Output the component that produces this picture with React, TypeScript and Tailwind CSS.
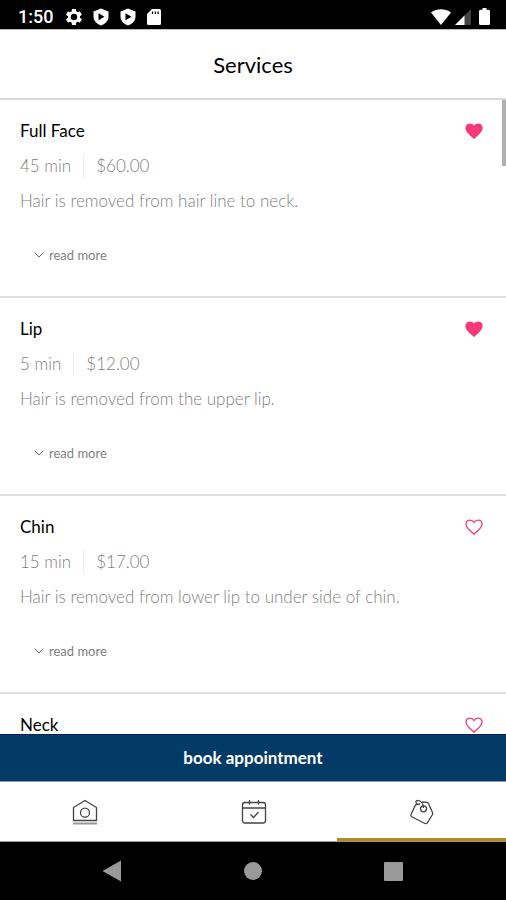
import { useState } from "react";

const services = [
  { name: "Full Face", time: "45 min", price: "$60.00", text: "Hair is removed from hair line to neck.", liked: true },
  { name: "Lip", time: "5 min", price: "$12.00", text: "Hair is removed from the upper lip.", liked: true },
  { name: "Chin", time: "15 min", price: "$17.00", text: "Hair is removed from lower lip to under side of chin.", liked: false },
  { name: "Neck", time: "", price: "", text: "", liked: false },
];

const ShieldPlay = () => (
  <svg viewBox="0 0 16 18" className="h-[18px] w-4">
    <path d="M8 0.5L15.5 3.5V8.5C15.5 12.5 12.5 16 8 17.5C3.5 16 0.5 12.5 0.5 8.5V3.5Z" fill="#fff" />
    <path d="M5.5 5.2L11.5 8.7L5.5 12.2Z" fill="#000" />
  </svg>
);

const StatusBar = () => (
  <div className="flex h-[29px] shrink-0 items-center bg-black pt-1 pr-4 pl-[18px] text-white">
    <span className="w-12 font-[Roboto] text-[18px] leading-6 font-medium">1:50</span>
    <div className="flex items-center gap-[11px]">
      <svg viewBox="2 2 20 20" className="h-4 w-4" fill="#fff">
        <path d="M19.4 13a7.5 7.5 0 0 0 0-2l2.1-1.6a.5.5 0 0 0 .1-.7l-2-3.4a.5.5 0 0 0-.6-.2l-2.5 1a7.3 7.3 0 0 0-1.7-1l-.4-2.7a.5.5 0 0 0-.5-.4h-4a.5.5 0 0 0-.5.4L9 5.1a7.3 7.3 0 0 0-1.7 1l-2.5-1a.5.5 0 0 0-.6.2l-2 3.4a.5.5 0 0 0 .1.7L4.5 11a7.5 7.5 0 0 0 0 2l-2.2 1.6a.5.5 0 0 0-.1.7l2 3.4c.1.2.4.3.6.2l2.5-1a7.3 7.3 0 0 0 1.7 1l.4 2.7c0 .2.2.4.5.4h4c.3 0 .5-.2.5-.4l.4-2.7a7.3 7.3 0 0 0 1.7-1l2.5 1c.2.1.5 0 .6-.2l2-3.4a.5.5 0 0 0-.1-.7zM12 16a4 4 0 1 1 0-8 4 4 0 0 1 0 8z" />
      </svg>
      <ShieldPlay />
      <ShieldPlay />
      <svg viewBox="0 0 14 16" className="h-4 w-3.5">
        <path d="M5 0H12.5Q14 0 14 1.5V14.5Q14 16 12.5 16H1.5Q0 16 0 14.5V5Z" fill="#fff" />
        <path d="M5.5 2.5V5M8.3 2.5V5M11.1 2.5V5" stroke="#000" strokeWidth="1.2" />
      </svg>
    </div>
    <div className="ml-auto flex items-center gap-1">
      <svg viewBox="0 0 20 16" className="h-4 w-5">
        <path d="M0 3.5C6 -0.8 14 -0.8 20 3.5L10 16Z" fill="#fff" />
      </svg>
      <svg viewBox="0 0 16 16" className="h-4 w-4">
        <path d="M0 16L16 0V16Z" fill="#444" />
        <path d="M0 16L9.5 6.5V16Z" fill="#fff" />
      </svg>
      <svg viewBox="0 0 11 17" className="ml-1 h-[17px] w-[11px]" fill="#fff">
        <path d="M3.5 0H7.5V1.7H9.5Q11 1.7 11 3.2V15.5Q11 17 9.5 17H1.5Q0 17 0 15.5V3.2Q0 1.7 1.5 1.7H3.5Z" />
      </svg>
    </div>
  </div>
);

const ServiceCard = ({ name, time, price, text, liked: initial }: (typeof services)[number]) => {
  const [liked, setLiked] = useState(initial);
  return (
    <li className="min-h-[198px] shrink-0 border-b-2 border-[#dedede] px-5 pt-[19px] text-[#808080]">
      <div className="flex items-center justify-between">
        <h2 className="text-[17px] leading-6 text-black">{name}</h2>
        <button
          aria-label={`Favourite ${name}`}
          aria-pressed={liked}
          onClick={() => setLiked(!liked)}
          className="mr-[3px]"
        >
          <svg viewBox="0 0 18 16" className="h-4 w-[18px]">
            <path
              d="M9 15.2C6.5 12.9 1 9 1 5.3C1 2.8 2.7 1.2 4.9 1.2C6.7 1.2 8.2 2.1 9 3.5C9.8 2.1 11.3 1.2 13.1 1.2C15.3 1.2 17 2.8 17 5.3C17 9 11.5 12.9 9 15.2Z"
              fill={liked ? "#fb3778" : "none"}
              stroke="#ed3d72"
              strokeWidth="1.3"
            />
          </svg>
        </button>
      </div>
      {text && (
        <>
          <div className="mt-[11px] flex text-[17px] leading-6 font-light">
            <span className="border-r border-[#ededed] pr-3">{time}</span>
            <span className="pl-3">{price}</span>
          </div>
          <p className="mt-[11px] text-[17px] leading-6 font-light">{text}</p>
          <button className="mt-8 ml-3.5 flex items-center gap-[5px] text-[13px] leading-5">
            <svg viewBox="0 0 10 6" className="h-1.5 w-2.5" fill="none" stroke="#666">
              <path d="M0.7 0.7L5 5L9.3 0.7" />
            </svg>
            read more
          </button>
        </>
      )}
    </li>
  );
};

const TabBar = () => (
  <nav className="grid h-[60px] shrink-0 grid-cols-3 border-b border-[#999] bg-white text-[#444]">
    <a href="#home" aria-label="Home" className="flex items-center justify-center pl-0.5">
      <svg viewBox="0 0 26 26" className="h-[26px] w-[26px]" fill="none" stroke="currentColor" strokeWidth="1.3">
        <path d="M1.5 21.5V8.5L13 1.5L24.5 8.5V21.5Z" />
        <circle cx="13" cy="13.7" r="4.5" />
        <path d="M1 24.5H25" stroke="#999" strokeWidth="2" />
      </svg>
    </a>
    <a href="#calendar" aria-label="Appointments" className="flex items-center justify-center pl-0.5">
      <svg viewBox="0 0 26 26" className="h-[26px] w-[26px]" fill="none" stroke="currentColor" strokeWidth="1.3">
        <rect x="1.5" y="3.5" width="23" height="20.5" rx="2.5" />
        <path d="M1.5 9H24.5M8.5 1V5.5M17.5 1V5.500M9.500 15.500L12.500 18.500L17.500 13" />
      </svg>
    </a>
    <a
      href="#services"
      aria-label="Services"
      aria-current="page"
      className="flex items-center justify-center border-b-3 border-[#b58a18] pt-[3px]"
    >
      <svg viewBox="0 0 26 26" className="h-[26px] w-[26px]" fill="none" stroke="currentColor" strokeWidth="1.3">
        <path d="M8 5L6.500 6L2 15.500Q1.500 17 2.800 17.800L16 24.500Q17.500 25 18.300 23.800L23.500 15.500Q24 14.500 23.500 13.500L19.500 4.500Q19 3.500 18 3.300L13 3" />
        <circle cx="14.500" cy="9.800" r="3" />
        <path d="M14.500 9C14.500 4.500 12 1.500 8.500 1.300C6.500 1.300 6.500 3.500 8 5.500L11 5" />
      </svg>
    </a>
  </nav>
);

const SystemNav = () => (
  <div className="grid h-[58px] shrink-0 grid-cols-3 items-center bg-black px-[42px]">
    <button aria-label="Back" className="flex justify-center">
      <svg viewBox="0 0 20 22" className="h-[22px] w-5">
        <path d="M0.5 11L19 0.5V21.5Z" fill="#999" />
      </svg>
    </button>
    <button aria-label="Home screen" className="flex justify-center">
      <span className="size-[18px] rounded-full bg-[#999]" />
    </button>
    <button aria-label="Recent apps" className="flex justify-center">
      <span className="size-[19px] rounded-[1px] bg-[#999]" />
    </button>
  </div>
);

export default function App() {
  return (
    <div className="flex h-dvh flex-col bg-white font-['Lato',sans-serif]">
      <StatusBar />
      <header className="flex h-[71px] shrink-0 items-center justify-center border-t border-b-2 border-t-[#bbb] border-b-[#d8d8d8] pt-0.5">
        <h1 className="text-[22px] leading-7 text-black">Services</h1>
      </header>
      <main className="relative min-h-0 flex-1 overflow-hidden">
        <ul className="flex flex-col">
          {services.map((s) => (
            <ServiceCard key={s.name} {...s} />
          ))}
        </ul>
        <div className="absolute top-0 right-0 h-[66px] w-1 bg-[#b0b0b0]" />
      </main>
      <button className="h-12 shrink-0 border-t border-b border-t-[#001f4d] border-b-[#8a9bb0] bg-[#043b66] text-[17px] font-bold text-white">
        book appointment
      </button>
      <TabBar />
      <SystemNav />
    </div>
  );
}
